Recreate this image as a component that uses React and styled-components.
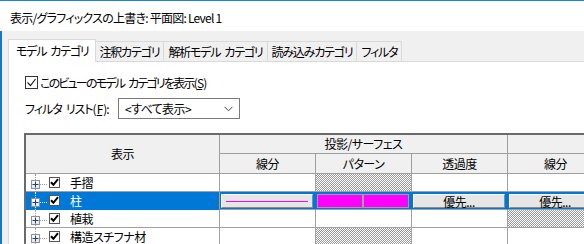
import React from 'react';
import styled, { createGlobalStyle, css } from 'styled-components';

const Global = createGlobalStyle`
  html, body { margin: 0; padding: 0; background: #f0f0f0; }
  body {
    font-family: "Noto Sans CJK JP", "Noto Sans", sans-serif;
    font-size: 12px;
    color: #000;
    font-feature-settings: "palt";
  }
  * { box-sizing: border-box; }
`;

const Window = styled.div`
  width: 584px;
  height: 244px;
  overflow: hidden;
  display: flex;
  flex-direction: column;
  background: #f0f0f0;
`;

const TitleBar = styled.div`
  height: 31px;
  flex-shrink: 0;
  background: #fff;
  border-top: 1px solid #1a85d8;
  padding: 2px 0 0 10px;
  display: flex;
  align-items: center;
  white-space: nowrap;
  font-size: 12px;
  letter-spacing: -0.75px;
`;

const Body = styled.div`
  flex: 1;
  display: flex;
  flex-direction: column;
  padding: 8px 0 0 6px;
  border-left: 2px solid #0a7bd6;
  min-height: 0;
`;

const TabStrip = styled.div`
  display: flex;
  align-items: flex-end;
  height: 22px;
  flex-shrink: 0;
  position: relative;
  z-index: 1;
`;

const Tab = styled.div`
  height: 20px;
  padding: 0 4px;
  display: flex;
  align-items: center;
  white-space: nowrap;
  letter-spacing: -1.2px;
  background: #f0f0f0;
  border: 1px solid #d9d9d9;
  border-bottom: none;
  margin-left: -1px;
  ${p => p.$active && css`
    height: 23px;
    margin-bottom: -1px;
    margin-left: 0;
    padding: 0 6px 1px 7px;
    background: #fff;
    position: relative;
    z-index: 2;
  `}
`;

const Panel = styled.div`
  flex: 1;
  background: #fff;
  border-top: 1px solid #d9d9d9;
  border-left: 1px solid #d9d9d9;
  padding: 14px 0 0 15px;
  display: flex;
  flex-direction: column;
  min-width: 0;
`;

const CheckRow = styled.label`
  display: flex;
  align-items: center;
  height: 13px;
  margin-left: 1px;
  white-space: nowrap;
  letter-spacing: -1.8px;
`;

const Check = styled.span`
  width: 13px;
  height: 13px;
  border: 1px solid #333;
  background: #fff;
  display: inline-flex;
  align-items: center;
  justify-content: center;
  margin-right: 2px;
  flex-shrink: 0;
`;

const U = styled.span`
  text-decoration: underline;
  margin: 0 1px;
`;

const Gap = styled.span`
  display: inline-block;
  width: ${p => p.$w}px;
`;

const FilterRow = styled.div`
  display: flex;
  align-items: center;
  margin-top: 9px;
  margin-left: 1px;
  height: 21px;
`;

const FilterLabel = styled.span`
  width: 93px;
  white-space: nowrap;
  letter-spacing: -1px;
`;

const Select = styled.div`
  width: 122px;
  height: 21px;
  border: 1px solid #7a7a7a;
  display: flex;
  align-items: center;
  justify-content: space-between;
  padding: 0 6px 0 6px;
  background: #fff;
  letter-spacing: -0.6px;
`;

const Grid = styled.div`
  margin-top: 14px;
  display: grid;
  grid-template-columns: 194px repeat(4, 96px);
  grid-template-rows: 19px 20px repeat(4, 18px);
  border-top: 2px solid #6b6b6b;
  border-left: 2px solid #6b6b6b;
  width: max-content;
  letter-spacing: -0.5px;
`;

const Head = styled.div`
  background: #f0f0f0;
  border-right: 1px solid #a0a0a0;
  border-bottom: 1px solid #a0a0a0;
  display: flex;
  align-items: center;
  justify-content: center;
  padding-bottom: 1px;
  ${p => p.$rows && css`grid-row: span ${p.$rows};`}
  ${p => p.$cols && css`grid-column: span ${p.$cols};`}
`;

const hatch = css`
  background: repeating-conic-gradient(#9a9a9a 0 25%, #ffffff 0 50%) 0 0 / 2px 2px;
`;

const Cell = styled.div`
  background: #fff;
  border-right: 1px solid #a0a0a0;
  border-bottom: 1px solid #a0a0a0;
  display: flex;
  align-items: stretch;
  ${p => p.$hatch && hatch}
  ${p => p.$sel && css`
    background: #0078d7;
    border-right-color: #0078d7;
    padding: 2px 2px 1px 1px;
  `}
`;

const TreeCell = styled.div`
  position: relative;
  background: ${p => (p.$sel ? '#0078d7' : '#fff')};
  color: ${p => (p.$sel ? '#fff' : '#000')};
  border-right: 1px solid #a0a0a0;
  border-bottom: 1px solid ${p => (p.$sel ? '#0078d7' : '#a0a0a0')};
  display: flex;
  align-items: center;
  padding-left: 5px;
  &::before {
    content: '';
    position: absolute;
    left: 9px;
    top: 0;
    bottom: -1px;
    border-left: 1px dotted ${p => (p.$sel ? '#fff' : '#a0a0a0')};
  }
`;

const PlusBox = styled.span`
  position: relative;
  z-index: 1;
  width: 9px;
  height: 9px;
  margin-top: 3px;
  border: 1px solid #919191;
  background: linear-gradient(#fff, #e6e6e6);
  display: inline-flex;
  align-items: center;
  justify-content: center;
  flex-shrink: 0;
`;

const Connector = styled.span`
  width: 7px;
  margin-top: 3px;
  border-top: 1px dotted ${p => (p.$sel ? '#fff' : '#a0a0a0')};
  flex-shrink: 0;
`;

const TreeCheck = styled.span`
  width: 11px;
  height: 11px;
  margin-left: 2px;
  border: 1px solid #555;
  background: #fff;
  display: inline-flex;
  align-items: center;
  justify-content: center;
  flex-shrink: 0;
`;

const TreeLabel = styled.span`
  margin-left: 10px;
  white-space: nowrap;
`;

const Btn = styled.div`
  flex: 1;
  background: #e6e6e6;
  border: 1px solid;
  border-color: #fff #8c8c8c #8c8c8c #fff;
  display: flex;
  align-items: center;
  justify-content: center;
  color: #000;
  padding: 0 ${p => (p.$line ? '4px' : '0')};
`;

const LineSample = styled.span`
  flex: 1;
  height: 1px;
  background: #ff00ff;
`;

const PatternBtn = styled.div`
  flex: 1;
  display: flex;
  gap: 2px;
  background: #a0a0a0;
  border: 1px solid #a0a0a0;
`;

const Swatch = styled.span`
  flex: 1;
  background: #ff00ff;
`;

const PlusIcon = () => (
  <svg width="7" height="7" viewBox="0 0 7 7">
    <path d="M0.5 3.5h6M3.5 0.5v6" stroke="#1c3f8c" strokeWidth="1" />
  </svg>
);

const Tick = ({ thin }) =>
  thin ? (
    <svg width="11" height="11" viewBox="0 0 11 11">
      <path d="M1.5 5.5l3 3 5-6.5" stroke="#222" strokeWidth="1.2" fill="none" />
    </svg>
  ) : (
    <svg width="9" height="9" viewBox="0 0 9 9">
      <path d="M1 4.2l2.4 2.6L8 1.2" stroke="#000" strokeWidth="2" fill="none" />
    </svg>
  );

const Chevron = () => (
  <svg width="9" height="6" viewBox="0 0 9 6">
    <path d="M0.5 0.8l4 4 4-4" stroke="#444" strokeWidth="1" fill="none" />
  </svg>
);

const rows = [
  { name: '手摺', cells: [null, 'hatch', null, null] },
  { name: '柱', sel: true },
  { name: '植栽', cells: [null, null, null, 'hatch'] },
  { name: '構造スチフナ材', cells: [null, 'hatch', null, null] },
];

export default function App() {
  return (
    <>
      <Global />
      <Window>
        <TitleBar>表示/グラフィックスの上書き: 平面図: Level 1</TitleBar>
        <Body>
          <TabStrip>
            <Tab $active>モデル<Gap $w={4} />カテゴリ</Tab>
            <Tab>注釈カテゴリ</Tab>
            <Tab>解析モデル<Gap $w={4} />カテゴリ</Tab>
            <Tab>読み込みカテゴリ</Tab>
            <Tab>フィルタ</Tab>
          </TabStrip>
          <Panel>
            <CheckRow>
              <Check><Tick thin /></Check>
              このビューのモデル<Gap $w={4} />カテゴリを表示(<U>S</U>)
            </CheckRow>
            <FilterRow>
              <FilterLabel>フィルタ<Gap $w={4} />リスト(<U>F</U>):</FilterLabel>
              <Select>
                <span>&lt;すべて表示&gt;</span>
                <Chevron />
              </Select>
            </FilterRow>
            <Grid>
              <Head $rows={2}>表示</Head>
              <Head $cols={3}>投影/サーフェス</Head>
              <Head />
              <Head>線分</Head>
              <Head>パターン</Head>
              <Head>透過度</Head>
              <Head>線分</Head>
              {rows.map(r => (
                <React.Fragment key={r.name}>
                  <TreeCell $sel={r.sel}>
                    <PlusBox><PlusIcon /></PlusBox>
                    <Connector $sel={r.sel} />
                    <TreeCheck><Tick /></TreeCheck>
                    <TreeLabel>{r.name}</TreeLabel>
                  </TreeCell>
                  {r.sel ? (
                    <>
                      <Cell $sel><Btn $line><LineSample /></Btn></Cell>
                      <Cell $sel><PatternBtn><Swatch /><Swatch /></PatternBtn></Cell>
                      <Cell $sel><Btn>優先...</Btn></Cell>
                      <Cell $sel><Btn>優先...</Btn></Cell>
                    </>
                  ) : (
                    r.cells.map((c, i) => <Cell key={i} $hatch={c === 'hatch'} />)
                  )}
                </React.Fragment>
              ))}
            </Grid>
          </Panel>
        </Body>
      </Window>
    </>
  );
}
